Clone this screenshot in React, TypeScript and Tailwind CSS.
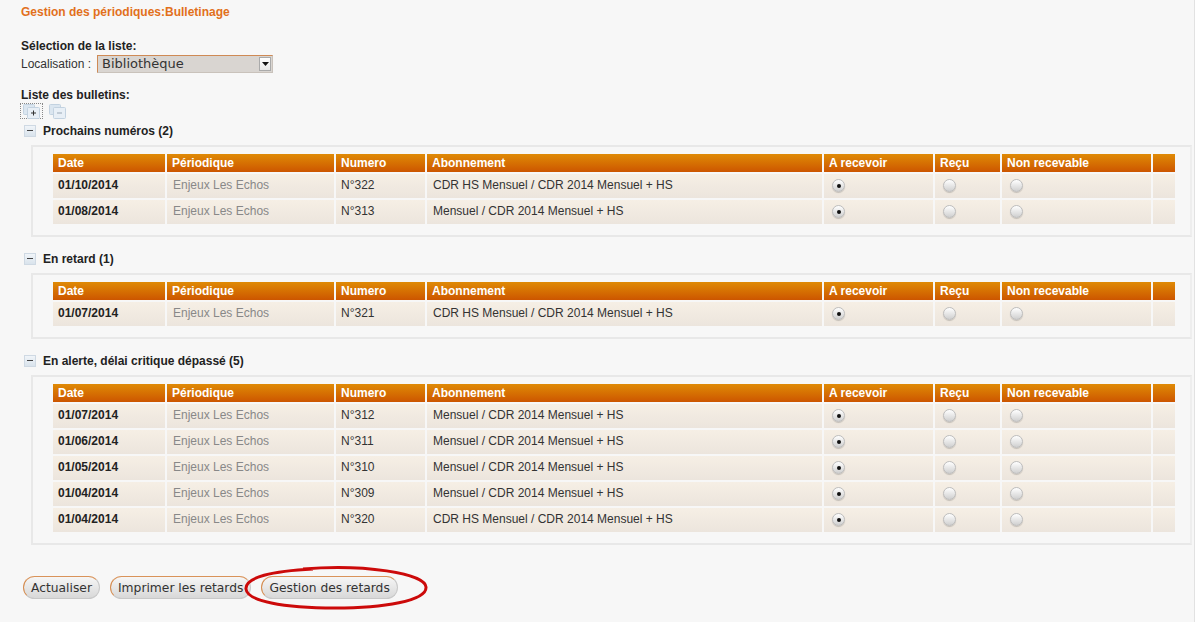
import React from "react";

type Row = { date: string; num: string; abo: string };

const cols = [
  { label: "Date", w: "w-[112px]" },
  { label: "Périodique", w: "w-[167px]" },
  { label: "Numero", w: "w-[89px]" },
  { label: "Abonnement", w: "w-[395px]" },
  { label: "A recevoir", w: "w-[109px]" },
  { label: "Reçu", w: "w-[65px]" },
  { label: "Non recevable", w: "w-[149px]" },
  { label: "", w: "w-[22px]" },
];

const sections: { title: string; rows: Row[] }[] = [
  {
    title: "Prochains numéros (2)",
    rows: [
      { date: "01/10/2014", num: "N°322", abo: "CDR HS Mensuel / CDR 2014 Mensuel + HS" },
      { date: "01/08/2014", num: "N°313", abo: "Mensuel / CDR 2014 Mensuel + HS" },
    ],
  },
  {
    title: "En retard (1)",
    rows: [{ date: "01/07/2014", num: "N°321", abo: "CDR HS Mensuel / CDR 2014 Mensuel + HS" }],
  },
  {
    title: "En alerte, délai critique dépassé (5)",
    rows: [
      { date: "01/07/2014", num: "N°312", abo: "Mensuel / CDR 2014 Mensuel + HS" },
      { date: "01/06/2014", num: "N°311", abo: "Mensuel / CDR 2014 Mensuel + HS" },
      { date: "01/05/2014", num: "N°310", abo: "Mensuel / CDR 2014 Mensuel + HS" },
      { date: "01/04/2014", num: "N°309", abo: "Mensuel / CDR 2014 Mensuel + HS" },
      { date: "01/04/2014", num: "N°320", abo: "CDR HS Mensuel / CDR 2014 Mensuel + HS" },
    ],
  },
];

const cell = "bg-gradient-to-b from-[#f6efe5] to-[#ece5dd] align-top";

function Radio({ checked }: { checked?: boolean }) {
  return (
    <span className="mt-[5px] flex h-[13px] w-[13px] items-center justify-center rounded-full border border-[#bdbdbd] bg-gradient-to-b from-[#ffffff] to-[#d0d0d0] shadow-[0_1px_1px_rgba(0,0,0,0.18)]">
      {checked && <span className="h-[4px] w-[4px] rounded-full bg-[#111]" />}
    </span>
  );
}

function MinusBox() {
  return (
    <span className="flex h-[12px] w-[12px] items-center justify-center border border-[#cfd9e3] bg-gradient-to-b from-[#f1f5f9] to-[#d9e3ec]">
      <span className="h-[1px] w-[6px] bg-[#444]" />
    </span>
  );
}

function StackIcon({ plus }: { plus?: boolean }) {
  return (
    <svg width="17" height="15" viewBox="0 0 17 15">
      <rect x="0.5" y="0.5" width="11" height="10" rx="1" fill="#dbe6f0" stroke="#c3d2e0" />
      <rect x="4.5" y="3.5" width="12" height="11" rx="1" fill="#e8eff6" stroke="#c3d2e0" />
      <line x1="8" y1="9" x2="13" y2="9" stroke={plus ? "#333" : "#9aa8b6"} strokeWidth="1" />
      {plus && <line x1="10.5" y1="6.5" x2="10.5" y2="11.5" stroke="#333" strokeWidth="1" />}
    </svg>
  );
}

function Section({ title, rows }: { title: string; rows: Row[] }) {
  return (
    <div>
      <div className="ml-[3px] flex h-[15px] items-center gap-[7px]">
        <MinusBox />
        <span className="text-[12px] font-bold text-[#222]">{title}</span>
      </div>
      <div className="ml-[10px] mr-[1px] mt-[7px] border-2 border-[#e8e8e8] border-r-[#eeeeee] pb-[9px] pl-[18px] pt-[5px]">
        <table className="w-[1126px] table-fixed border-separate border-spacing-[2px] text-[12px]">
          <thead>
            <tr>
              {cols.map((c, i) => (
                <th
                  key={i}
                  className={`${c.w} h-[18px] bg-gradient-to-b from-[#df8a06] to-[#cc5500] px-[5px] text-left align-middle font-bold leading-[15px] text-white`}
                >
                  {c.label}
                </th>
              ))}
            </tr>
          </thead>
          <tbody>
            {rows.map((r, i) => (
              <tr key={i} className="h-[24px]">
                <td className={`${cell} px-[5px] pt-[2px] font-bold text-[#222]`}>{r.date}</td>
                <td className={`${cell} px-[6px] pt-[2px] text-[#888]`}>Enjeux Les Echos</td>
                <td className={`${cell} px-[5px] pt-[2px] text-[#333]`}>{r.num}</td>
                <td className={`${cell} px-[6px] pt-[2px] text-[#333]`}>{r.abo}</td>
                <td className={`${cell} pl-[8px]`}>
                  <Radio checked />
                </td>
                <td className={`${cell} pl-[8px]`}>
                  <Radio />
                </td>
                <td className={`${cell} pl-[8px]`}>
                  <Radio />
                </td>
                <td className={cell} />
              </tr>
            ))}
          </tbody>
        </table>
      </div>
    </div>
  );
}

function Btn({ label }: { label: string }) {
  return (
    <button className="h-[23px] rounded-[12px] border border-[#c8c8c8] border-l-[#d48a4c] border-t-[#d9935a] bg-gradient-to-b from-[#f6f6f6] to-[#d8d8d8] px-[7px] font-['DejaVu_Sans',sans-serif] text-[12.3px] leading-[20px] text-[#333]">
      {label}
    </button>
  );
}

export default function App() {
  return (
    <div className="min-h-[622px] w-[1195px] border-r border-[#e2e2e2] bg-[#f7f7f7] font-['Liberation_Sans',Arial,sans-serif]">
      <div className="pl-[21px] pt-[5px]">
        <div className="h-[15px] text-[12px] font-bold leading-[15px] text-[#e2701c]">
          Gestion des périodiques:Bulletinage
        </div>

        <div className="mt-[19px] h-[15px] text-[12px] font-bold leading-[15px] text-[#222]">
          Sélection de la liste:
        </div>
        <div className="mt-[1px] flex h-[18px] items-center">
          <span className="text-[12px] text-[#333]">Localisation :</span>
          <div className="ml-[6px] flex h-[18px] w-[176px] items-center border border-[#c9c2bb] border-l-[#cf8a55] border-t-[#cf8a55] bg-[#d9d5d1]">
            <span className="flex-1 pl-[4px] font-['DejaVu_Sans',sans-serif] text-[13px] leading-[16px] text-[#333]">
              Bibliothèque
            </span>
            <span className="mr-[1px] flex h-[14px] w-[12px] items-center justify-center border border-[#aaa] bg-gradient-to-b from-white to-[#e6e6e6]">
              <svg width="7" height="4" viewBox="0 0 7 4">
                <path d="M0 0h7L3.5 4z" fill="#111" />
              </svg>
            </span>
          </div>
        </div>

        <div className="mt-[15px] h-[15px] text-[12px] font-bold leading-[15px] text-[#222]">
          Liste des bulletins:
        </div>
        <div className="flex h-[16px] items-center gap-[6px]">
          <span className="-ml-[1px] flex h-[16px] items-center border border-dotted border-[#888] px-[2px]">
            <StackIcon plus />
          </span>
          <StackIcon />
        </div>

        <div className="mr-[1px] mt-[4px] flex flex-col gap-[14px]">
          {sections.map((s, i) => (
            <Section key={i} title={s.title} rows={s.rows} />
          ))}
        </div>

        <div className="relative mt-[31px] flex items-center gap-[10px] pl-[2px]">
          <Btn label="Actualiser" />
          <Btn label="Imprimer les retards" />
          <Btn label="Gestion des retards" />
          <svg
            className="pointer-events-none absolute left-[222px] top-[-11px]"
            width="190"
            height="46"
            viewBox="0 0 190 46"
          >
            <path
              d="M60 4 C120 -1 182 8 183 22 C184 36 140 43 92 43 C40 43 4 36 3 24 C2 12 30 6 70 4"
              fill="none"
              stroke="#cc0a0a"
              strokeWidth="3"
            />
          </svg>
        </div>
      </div>
    </div>
  );
}
